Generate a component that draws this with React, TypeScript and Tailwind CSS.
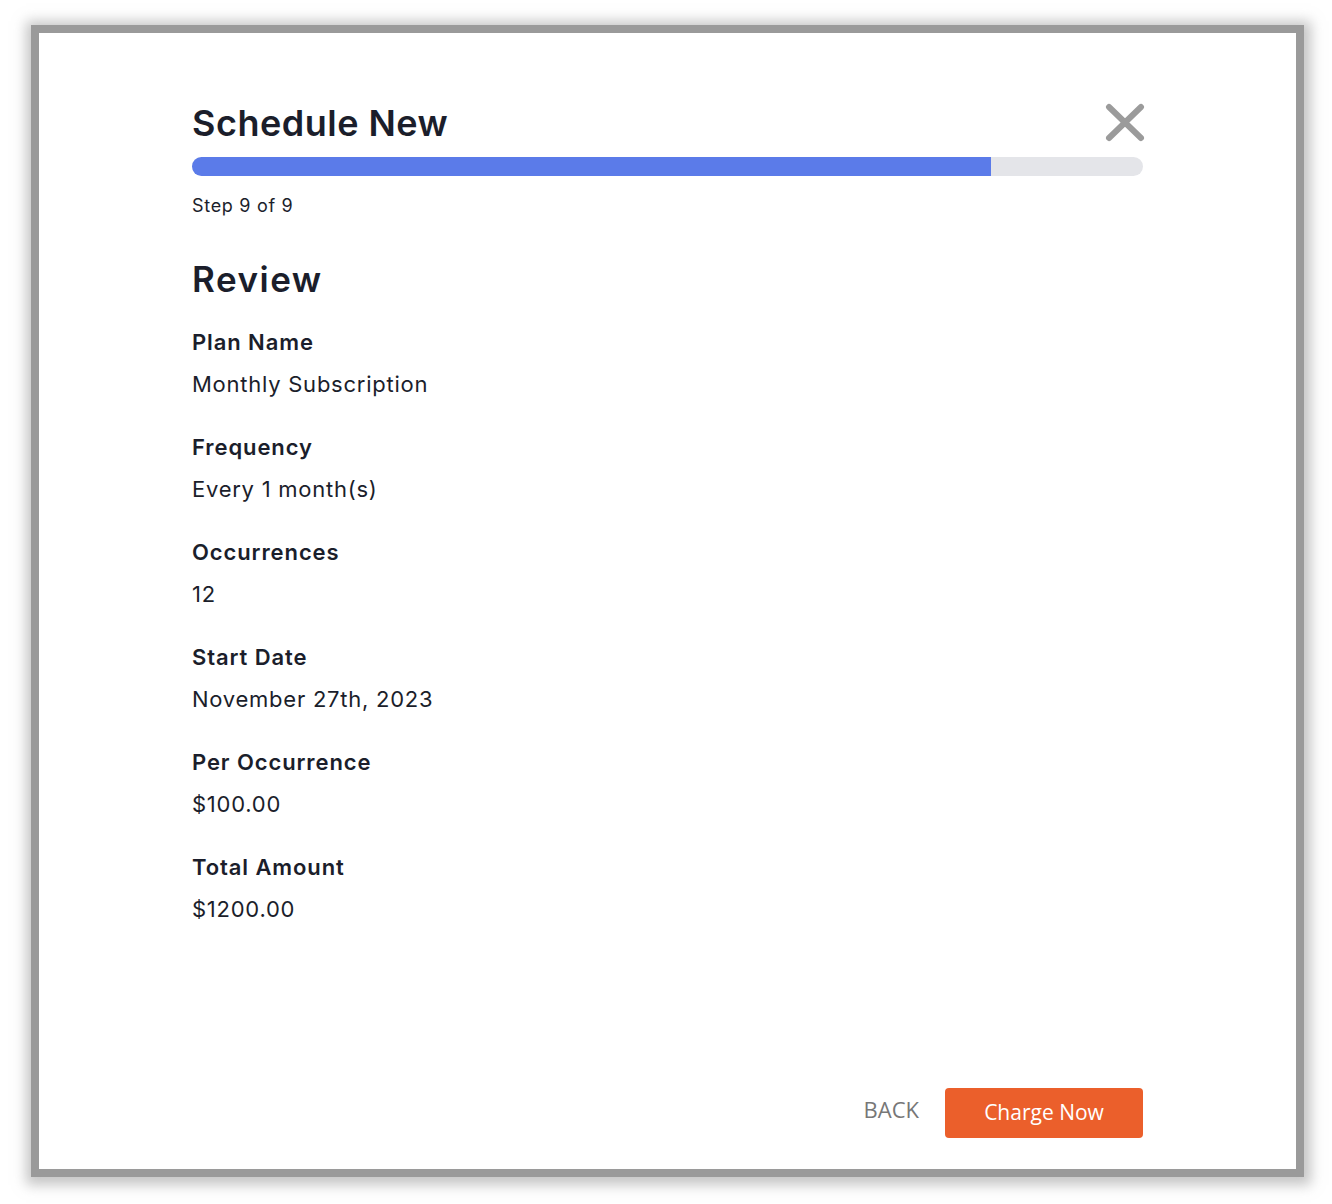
import React from "react";

const rows = [
  { label: "Plan Name", value: "Monthly Subscription" },
  { label: "Frequency", value: "Every 1 month(s)" },
  { label: "Occurrences", value: "12" },
  { label: "Start Date", value: "November 27th, 2023" },
  { label: "Per Occurrence", value: "$100.00" },
  { label: "Total Amount", value: "$1200.00" },
];

export default function App() {
  return (
    <div className="min-h-[1204px] w-[1332px] bg-white pl-[31px] pt-[25px]" style={{ fontFamily: "Inter, 'Noto Sans', sans-serif" }}>
      <div className="w-[1273px] h-[1152px] border-[8px] border-[#9a9a9a] shadow-[1px_2px_12px_6px_rgba(150,150,150,0.55)] bg-white">
        <div className="flex h-full flex-col px-[153px] pb-[31px] pt-[70px] text-[#1b1e2b]">
          <div className="flex items-start justify-between">
            <h1 className="text-[36px] font-semibold leading-[40px] tracking-[0.5px]">Schedule New</h1>
            <button className="-mr-[2px]" aria-label="Close">
              <svg width="40" height="39" viewBox="0 0 40 39">
                <path d="M4 4 L36 35 M36 4 L4 35" stroke="#9b9b9b" strokeWidth="6" strokeLinecap="round" />
              </svg>
            </button>
          </div>
          <div className="mt-[14px] h-[19px] w-full rounded-full bg-[#e4e5e9] overflow-hidden">
            <div className="h-full w-[84%] bg-[#5b7be9]" />
          </div>
          <p className="mt-[18px] text-[18px] leading-[24px] tracking-[0.7px]">Step 9 of 9</p>
          <h2 className="mt-[41px] text-[35px] font-semibold leading-[40px] tracking-[1.5px]">Review</h2>
          <div className="mt-[29px] flex flex-col gap-[35px]">
            {rows.map((r) => (
              <div key={r.label} className="flex flex-col gap-[14px]">
                <div className="text-[22px] font-semibold leading-[28px] tracking-[0.9px]">{r.label}</div>
                <div className="text-[22px] leading-[28px] tracking-[0.75px]">{r.value}</div>
              </div>
            ))}
          </div>
          <div className="mt-auto flex items-center justify-end gap-[26px]" style={{ fontFamily: "'Open Sans', sans-serif" }}>
            <button className="-mt-[8px] text-[22px] uppercase text-[#777777]">Back</button>
            <button className="h-[50px] w-[198px] rounded-[4px] bg-[#eb5f2b] text-[21px] font-medium text-white">Charge Now</button>
          </div>
        </div>
      </div>
    </div>
  );
}
